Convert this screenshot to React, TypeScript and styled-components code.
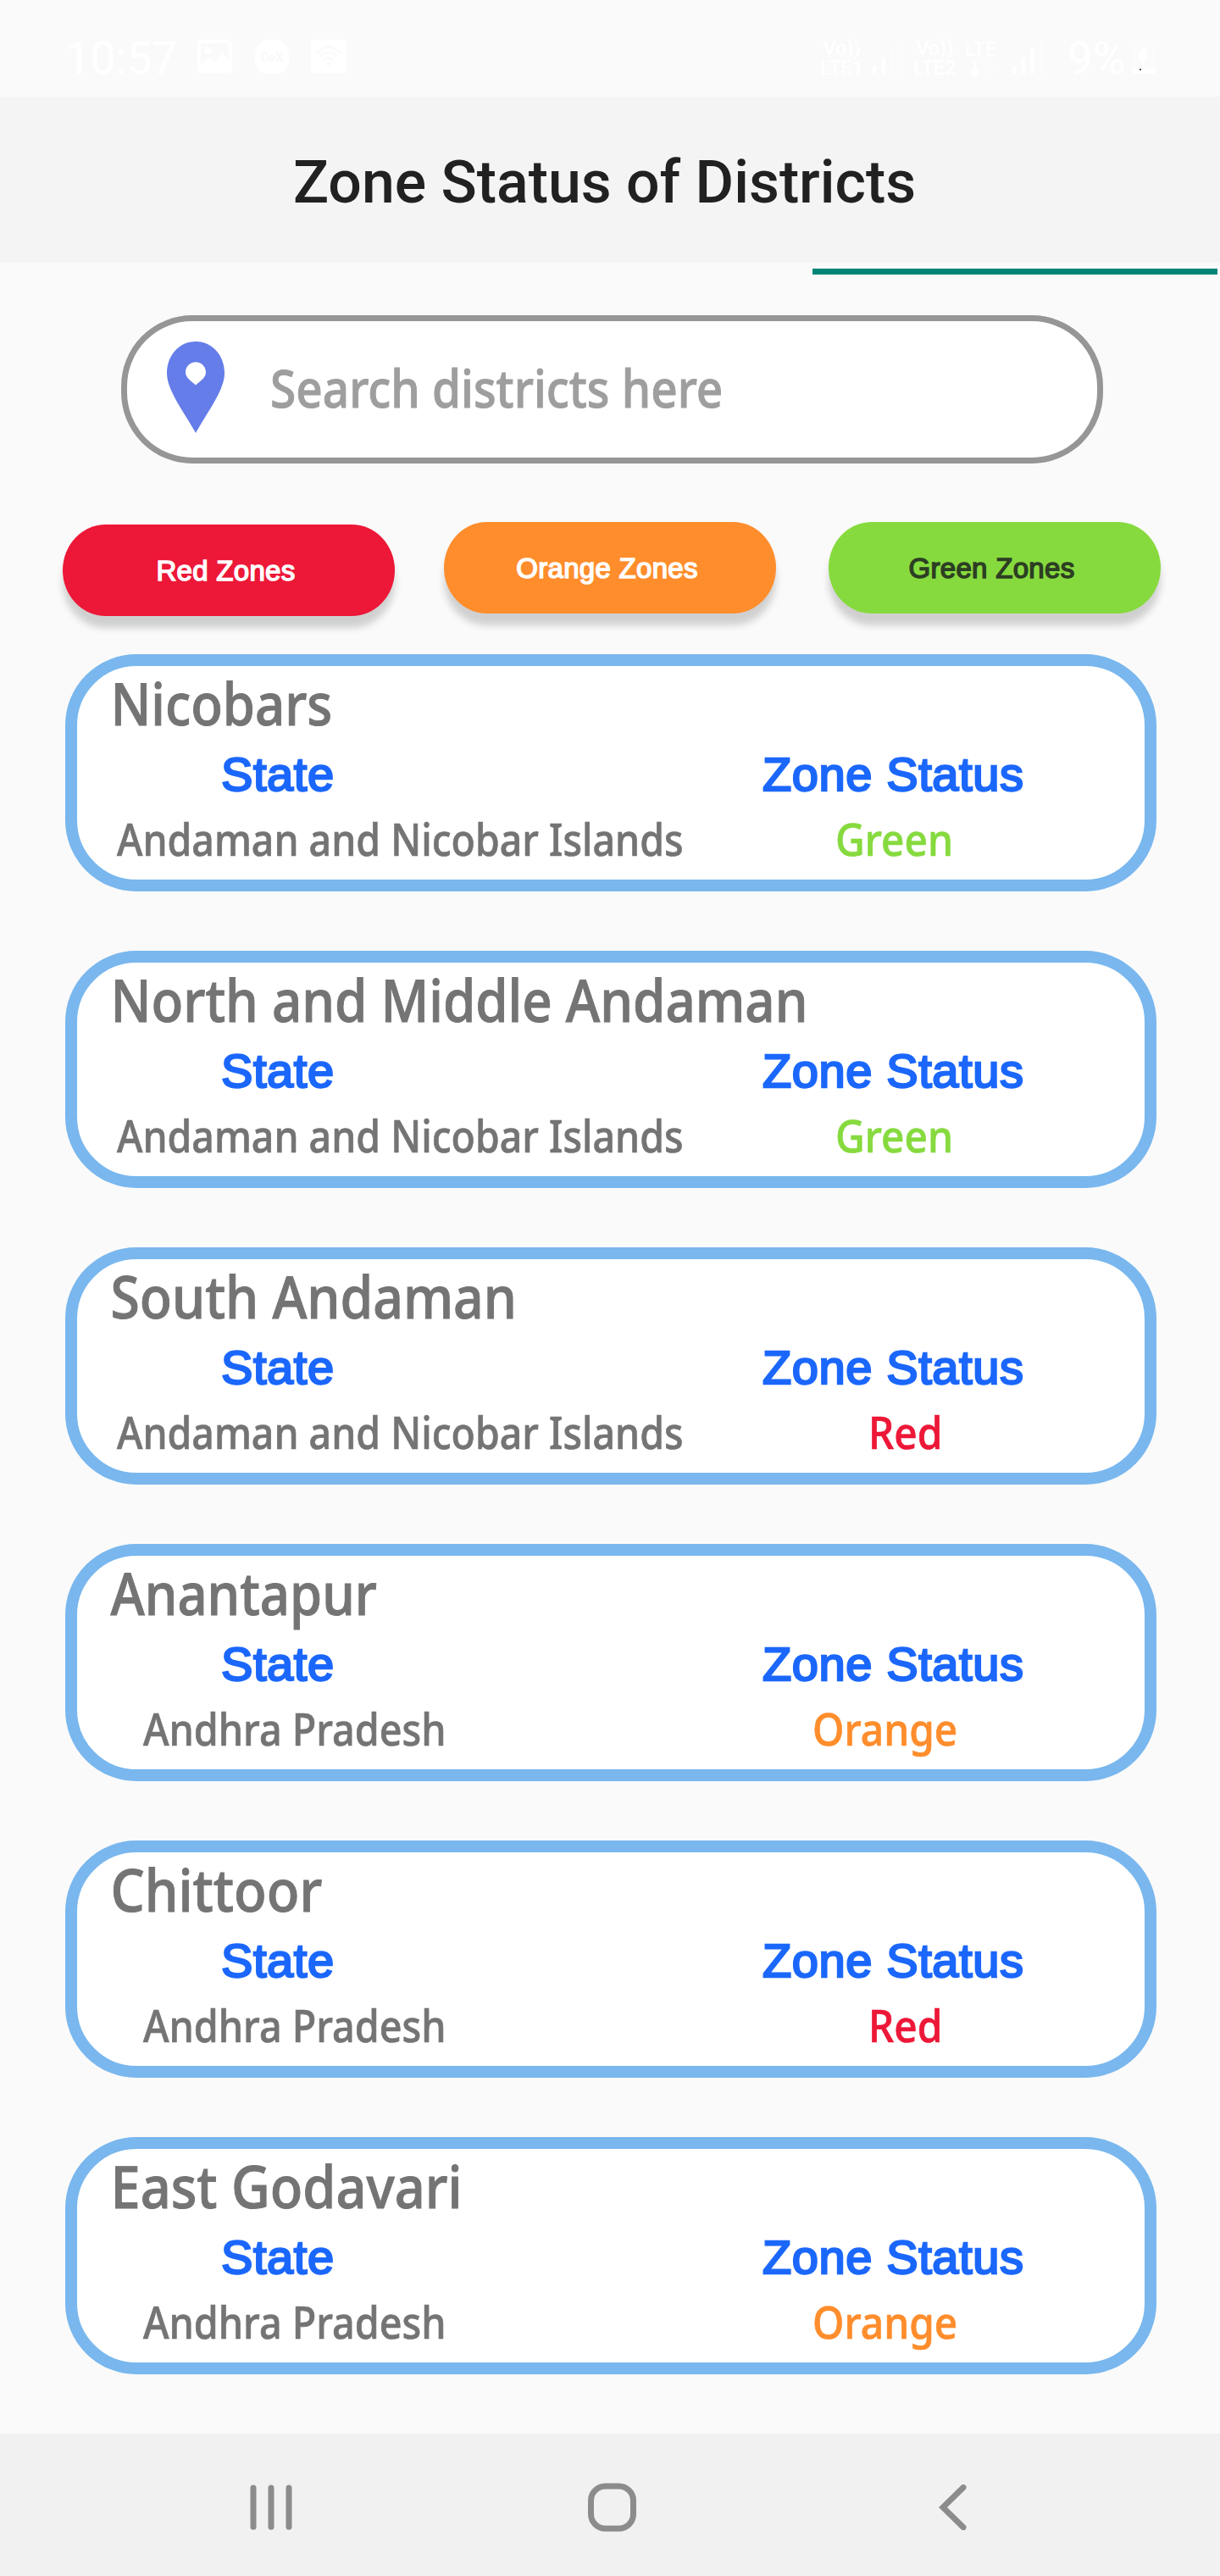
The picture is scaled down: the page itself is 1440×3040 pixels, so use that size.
import React from 'react';
import styled, { createGlobalStyle } from 'styled-components';

type Zone = 'Green' | 'Red' | 'Orange';

interface District {
  name: string;
  state: string;
  zone: Zone;
  stretch: number;
}

const zoneColors: Record<Zone, string> = {
  Red: '#ed1737',
  Orange: '#ff8d2c',
  Green: '#86da3e',
};

const zoneIndent: Record<Zone, number> = { Green: 100, Orange: 73, Red: 139 };

const districts: District[] = [
  { name: 'Nicobars', state: 'Andaman and Nicobar Islands', zone: 'Green', stretch: 0.893 },
  { name: 'North and Middle Andaman', state: 'Andaman and Nicobar Islands', zone: 'Green', stretch: 0.896 },
  { name: 'South Andaman', state: 'Andaman and Nicobar Islands', zone: 'Red', stretch: 0.905 },
  { name: 'Anantapur', state: 'Andhra Pradesh', zone: 'Orange', stretch: 0.892 },
  { name: 'Chittoor', state: 'Andhra Pradesh', zone: 'Red', stretch: 0.918 },
  { name: 'East Godavari', state: 'Andhra Pradesh', zone: 'Orange', stretch: 0.914 },
];

const humanist = '"Noto Sans", "Open Sans", sans-serif';
const rounded = '"Liberation Sans", Arial, sans-serif';

const GlobalStyle = createGlobalStyle`
  * { box-sizing: border-box; }
  body { margin: 0; background: #fafafa; }
`;

const Screen = styled.div`
  width: 1440px;
  height: 3040px;
  display: flex;
  flex-direction: column;
  background: #fafafa;
  font-family: Roboto, sans-serif;
  white-space: nowrap;
  overflow: hidden;
`;

const StatusBar = styled.div`
  height: 114px;
  flex: none;
  display: flex;
  justify-content: space-between;
  padding: 46px 76px 0 77px;
  color: #fff;
`;

const StatusGroup = styled.div`
  display: flex;
  align-items: flex-start;
`;

const StatusText = styled.span<{ $width: number; $gap?: number }>`
  width: ${(p) => p.$width}px;
  margin-left: ${(p) => p.$gap ?? 0}px;
  font-size: 53px;
  line-height: 46px;
`;

const StatusIcon = styled.svg<{ $gap: number }>`
  display: block;
  flex: none;
  margin-left: ${(p) => p.$gap}px;
`;

const Network = styled.div<{ $width: number; $gap?: number }>`
  width: ${(p) => p.$width}px;
  flex: none;
  margin-left: ${(p) => p.$gap ?? 0}px;
  display: flex;
  flex-direction: column;
  align-items: center;
  font-size: 24px;
  font-weight: 500;
  line-height: 23px;
  letter-spacing: -0.3px;
`;

const Header = styled.header`
  height: 196px;
  flex: none;
  padding-left: 346px;
  background: #f4f4f4;
`;

const HeaderTitle = styled.h1`
  margin: 0;
  padding-top: 5px;
  color: #212121;
  font-size: 69.8px;
  font-weight: 500;
  line-height: 192px;
`;

const TabStrip = styled.div`
  flex: none;
  padding: 7px 0 0 959px;
`;

const TabIndicator = styled.div`
  width: 478px;
  height: 7px;
  background: #008577;
`;

const SearchBox = styled.div`
  width: 1159px;
  height: 175px;
  flex: none;
  display: flex;
  align-items: center;
  gap: 54px;
  margin: 48px 0 0 143px;
  padding: 0 0 5px 47px;
  border: 7px solid #969696;
  border-radius: 84px;
  background: #fff;
`;

const Placeholder = styled.span`
  color: #9e9e9e;
  font: 500 62.5px/80px ${humanist};
  -webkit-text-stroke: 1px #9e9e9e;
  transform: scaleX(0.879);
  transform-origin: left;
`;

const Filters = styled.div`
  flex: none;
  display: flex;
  gap: 58px;
  height: 225px;
  padding: 69px 0 0 74px;
`;

const FilterButton = styled.button<{ $bg: string; $dark?: boolean; $drop?: number; $shift?: number }>`
  width: 392px;
  height: 108px;
  display: flex;
  align-items: center;
  justify-content: center;
  margin: ${(p) => p.$drop ?? 0}px 0 0 ${(p) => p.$shift ?? 0}px;
  padding: 1px 7px 0 0;
  border: 0;
  border-radius: 51px / 54px;
  background: ${(p) => p.$bg};
  color: ${(p) => (p.$dark ? '#2c3e22' : '#fff')};
  font: 33px/40px ${rounded};
  letter-spacing: 0.3px;
  -webkit-text-stroke: 1.5px currentColor;
  stroke-linejoin: round;
  box-shadow: 0 14px 9px rgba(0, 0, 0, 0.17);
`;

const List = styled.main`
  flex: none;
  display: flex;
  flex-direction: column;
  gap: 70px;
  padding-left: 77px;
`;

const Card = styled.article`
  width: 1288px;
  height: 280px;
  padding-top: 3px;
  border: 14px solid #79b7ee;
  border-radius: 84px;
  background: #fff;
`;

const CardTitle = styled.h2<{ $stretch: number }>`
  margin: 0 0 13px;
  padding-left: 39.5px;
  color: #747474;
  font: 500 69px/80px ${humanist};
  -webkit-text-stroke: 1px #747474;
  transform: scaleX(${(p) => p.$stretch});
  transform-origin: 39.5px 50%;
`;

const CardGrid = styled.div`
  display: grid;
  grid-template-columns: 795px 1fr;
  row-gap: 9px;
`;

const ColumnName = styled.span<{ $indent: number }>`
  justify-self: start;
  margin-left: ${(p) => p.$indent}px;
  color: #1b67fb;
  font: 56px/64px ${rounded};
  letter-spacing: 0.6px;
  -webkit-text-stroke: 2.4px #1b67fb;
  stroke-linejoin: round;
`;

const Value = styled.span<{ $indent: number; $color: string; $stretch: number }>`
  justify-self: start;
  margin-left: ${(p) => p.$indent}px;
  color: ${(p) => p.$color};
  font: 500 52px/70px ${humanist};
  -webkit-text-stroke: 0.7px ${(p) => p.$color};
  transform: scaleX(${(p) => p.$stretch});
  transform-origin: left;
`;

const NavBar = styled.nav`
  height: 168px;
  flex: none;
  display: flex;
  align-items: center;
  justify-content: space-between;
  margin-top: 70px;
  padding: 5px 299px 0 295px;
  background: #f1f1f1;
`;

const NavIcon = styled.svg<{ $pull?: number }>`
  display: block;
  margin-right: ${(p) => p.$pull ?? 0}px;
  fill: none;
  stroke: #8c8c8c;
  stroke-width: 7;
  stroke-linecap: round;
`;

function SignalBars({ gap, strong }: { gap: number; strong: number }) {
  const heights = [9, 19, 30, 40];
  return (
    <StatusIcon $gap={gap} width="37" height="42" viewBox="0 0 37 42">
      {heights.map((h, i) => (
        <rect key={h} x={i * 10.6} y={41 - h} width="4.6" height={h} rx="2" fill="#fff" opacity={i < strong ? 1 : 0.3} />
      ))}
    </StatusIcon>
  );
}

function BatteryIcon() {
  return (
    <StatusIcon $gap={0} width="28" height="42" viewBox="0 0 28 42">
      <path d="M9 1H19V5H28V35H0V5H9Z" fill="#fff" opacity="0.3" />
      <path d="M0 35H28V38Q28 41 25 41H3Q0 41 0 38Z" fill="#fff" />
      <path d="M12 10H18L15.500 18H21L10 34L12.500 23H6Z" fill="#fff" />
      <rect x="9" y="35" width="2" height="2" fill="#555" />
    </StatusIcon>
  );
}

function PinIcon() {
  return (
    <svg width="68" height="108" viewBox="0 0 68 108">
      <path
        fill="#657de9"
        fillRule="evenodd"
        d="M34 108C21 84 0 58 0 37.5C0 16 15 0 34 0S68 16 68 37.5C68 58 47 84 34 108ZM34 51.5C40 46 46 42.500 46 36.500C46 29.500 40.500 24.300 34 24.300S22 29.500 22 36.500C22 42.500 28 46 34 51.500Z"
      />
    </svg>
  );
}

function DistrictCard({ name, state, zone, stretch }: District) {
  const longState = state.length > 20;
  return (
    <Card>
      <CardTitle $stretch={stretch}>{name}</CardTitle>
      <CardGrid>
        <ColumnName $indent={170}>State</ColumnName>
        <ColumnName $indent={14}>Zone Status</ColumnName>
        <Value $indent={longState ? 47 : 78} $color="#747474" $stretch={longState ? 0.893 : 0.898}>{state}</Value>
        <Value $indent={zoneIndent[zone]} $color={zoneColors[zone]} $stretch={0.92}>{zone}</Value>
      </CardGrid>
    </Card>
  );
}

export default function App() {
  return (
    <Screen>
      <GlobalStyle />
      <StatusBar>
        <StatusGroup>
          <StatusText $width={132}>10:57</StatusText>
          <StatusIcon $gap={24} width="41" height="41" viewBox="0 0 41 41" fill="#fff">
            <path fillRule="evenodd" d="M4 1H37Q41 1 41 5V36Q41 40 37 40H4Q0 40 0 36V5Q0 1 4 1ZM4 5V30L13 21L20 27L30 17L37 25V5Z" />
            <circle cx="12.500" cy="14" r="4.500" />
          </StatusIcon>
          <StatusIcon $gap={27} width="40" height="42" viewBox="0 0 40 42">
            <rect y="1" width="40" height="40" rx="16" fill="#fff" />
            <text x="20" y="26.500" textAnchor="middle" fontSize="15" fill="#f7f7f7">DeX</text>
          </StatusIcon>
          <StatusIcon $gap={26} width="42" height="41" viewBox="0 0 42 41">
            <rect y="1" width="41.500" height="39" rx="2" fill="#fff" />
            <g fill="none" stroke="#fafafa" strokeWidth="3">
              <path d="M6 17Q20.500 2 35 17M10.500 21Q20.500 11 30.500 21M15 25.500Q20.500 20 26 25.500" />
            </g>
            <circle cx="20.500" cy="29.500" r="2.500" fill="#fafafa" />
          </StatusIcon>
        </StatusGroup>
        <StatusGroup>
          <Network $width={51}><span>Vo))</span><span>LTE1</span></Network>
          <SignalBars gap={11} strong={2} />
          <Network $width={52} $gap={10}><span>Vo))</span><span>LTE2</span></Network>
          <StatusIcon $gap={10} width="42" height="46" viewBox="0 0 42 46">
            <text x="0" y="19.500" fontSize="23" fontWeight="500" fill="#fff">LTE</text>
            <path d="M12 27V42M6.500 37L12 42.500L17.500 37" stroke="#fff" strokeWidth="4" fill="none" />
            <path d="M29 42V28M23.500 33L29 27.500L34.500 33" stroke="#fff" strokeWidth="4" fill="none" opacity="0.3" />
          </StatusIcon>
          <SignalBars gap={14} strong={3} />
          <StatusText $width={76} $gap={28}>9%</StatusText>
          <BatteryIcon />
        </StatusGroup>
      </StatusBar>
      <Header><HeaderTitle>Zone Status of Districts</HeaderTitle></Header>
      <TabStrip><TabIndicator /></TabStrip>
      <SearchBox>
        <PinIcon />
        <Placeholder>Search districts here</Placeholder>
      </SearchBox>
      <Filters>
        <FilterButton $bg={zoneColors.Red} $drop={3}>Red Zones</FilterButton>
        <FilterButton $bg={zoneColors.Orange}>Orange Zones</FilterButton>
        <FilterButton $bg={zoneColors.Green} $dark $shift={4}>Green Zones</FilterButton>
      </Filters>
      <List>
        {districts.map((d) => <DistrictCard key={d.name} {...d} />)}
      </List>
      <NavBar>
        <NavIcon width="50" height="54" viewBox="0 0 50 54"><path d="M4 4V50M25 4V50M46 4V50" /></NavIcon>
        <NavIcon $pull={8} width="57" height="58" viewBox="0 0 57 58"><rect x="3.500" y="4" width="50" height="50" rx="17" /></NavIcon>
        <NavIcon width="33" height="54" viewBox="0 0 33 54"><path d="M29 3.500L5 27L29 50.500" /></NavIcon>
      </NavBar>
    </Screen>
  );
}
